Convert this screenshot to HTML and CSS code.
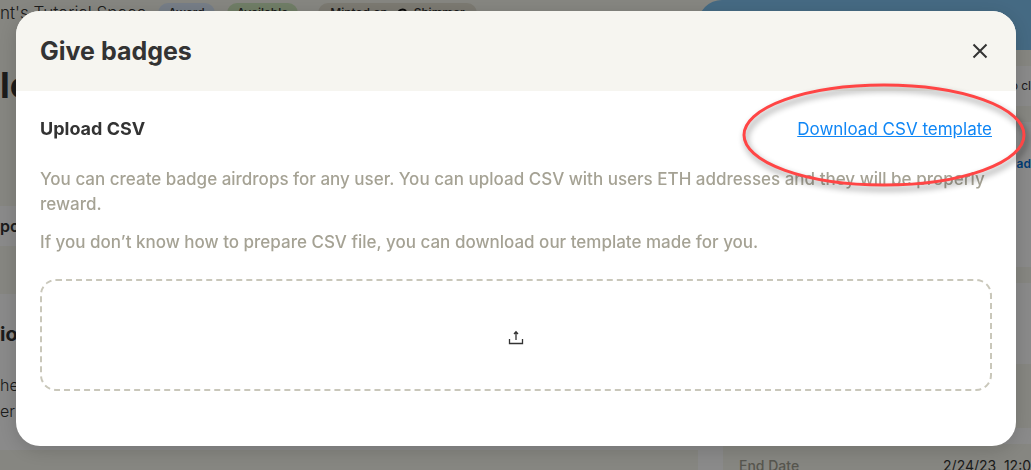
FILE: index.html
```html
<!DOCTYPE html>
<html lang="en">
<head>
<meta charset="utf-8">
<meta name="viewport" content="width=device-width, initial-scale=1">
<title>Give badges</title>
<link rel="stylesheet" href="styles.css">
</head>
<body>
<div class="page">
  <main class="main">
    <header class="intro">
      <div class="meta">
        <span class="space-name">nt's Tutorial Space</span>
        <span class="pill pill-blue">Award</span>
        <span class="pill pill-green">Available</span>
        <span class="pill pill-sand">Minted on:
          <svg class="shimmer" viewBox="0 0 12 12" aria-hidden="true"><path d="M10 3C7 0 2 2 2 6s4 5 7 3V7H6"/></svg>
          Shimmer</span>
      </div>
      <h1 class="name">le</h1>
    </header>
    <nav class="tabs">po</nav>
    <section class="about">
      <h2 class="about-title">ion</h2>
      <p class="about-text">he<br>er</p>
    </section>
  </main>
  <aside class="side">
    <div class="cover"></div>
    <div class="side-row claim">o cl</div>
    <div class="side-card"><a class="side-link" href="#">ad</a></div>
    <div class="side-row side-status"></div>
    <div class="side-dates"><span class="date-label">End Date</span><span class="date-value">2/24/23, 12:0</span></div>
  </aside>
</div>
<div class="backdrop">
  <section class="modal" role="dialog" aria-labelledby="modal-title">
    <header class="modal-header">
      <h2 class="modal-title" id="modal-title">Give badges</h2>
      <button class="close" type="button" aria-label="Close">
        <svg viewBox="0 0 24 24"><path d="M5.500 5.500l13 13M18.500 5.500l-13 13"/></svg>
      </button>
    </header>
    <div class="modal-body">
      <div class="upload-head">
        <h3 class="upload-title">Upload CSV</h3>
        <a class="download" href="#">Download CSV template</a>
      </div>
      <div class="help">
        <p>You can create badge airdrops for any user. You can upload CSV with users ETH addresses and they will be properly reward.</p>
        <p>If you don’t know how to prepare CSV file, you can download our template made for you.</p>
      </div>
      <label class="dropzone">
        <input class="file" type="file" accept=".csv" aria-label="Upload CSV file">
        <svg class="upload-icon" viewBox="0 0 16 16" aria-hidden="true"><path d="M1.500 9v4.500h13V9M8 10V2M6 4l2-2.200L10 4"/></svg>
      </label>
    </div>
    <svg class="highlight" viewBox="0 0 284 104" aria-hidden="true"><ellipse cx="142" cy="52" rx="140" ry="50"/></svg>
  </section>
</div>
</body>
</html>
```
FILE: styles.css
```css
* { box-sizing: border-box; }
body {
  margin: 0;
  height: 100vh;
  overflow: hidden;
  font-family: Inter, "Open Sans", sans-serif;
  font-size: 16px;
  color: #333;
  background: #fff;
}
h1, h2, h3, p { margin: 0; }

.page {
  display: grid;
  grid-template-columns: 1fr 333px;
  height: 100vh;
  background: #f8f8ee;
}
.main { display: flex; flex-direction: column; min-width: 0; }
.intro { height: 206px; }
.meta { display: flex; gap: 12px; align-items: center; height: 26px; white-space: nowrap; }
.space-name { font-size: 17px; font-weight: 300; }
.pill { padding: 0 10px; font-size: 12px; line-height: 20px; border-radius: 10px; font-weight: 500; }
.pill-blue { background: #dbe9fa; }
.pill-green { background: #cfe8bd; }
.pill-sand { margin-left: 8px; padding: 0 12px; background: #e4e1d2; }
.shimmer { width: 12px; height: 12px; margin: 0 2px; vertical-align: middle; fill: none; stroke: #111; stroke-width: 2; }
.name { margin-top: 34px; font-size: 36px; line-height: 50px; }
.tabs { height: 40px; background: #fff; font-weight: 600; line-height: 40px; }
.about { margin-top: 48px; height: 156px; padding-top: 26px; background: #fff; }
.about-title { font-size: 20px; line-height: 28px; }
.about-text { margin-top: 24px; line-height: 26px; font-weight: 300; }

.side { display: flex; flex-direction: column; background: #f8f8ee; }
.cover { height: 50px; flex: none; border-top-left-radius: 24px; background: #80c4f2; }
.side-row { flex: none; background: #fff; }
.claim { height: 40px; margin-top: 16px; text-align: right; font-size: 12px; line-height: 40px; }
.side-card { height: 145px; flex: none; margin-top: 16px; padding-top: 30px; text-align: right; background: #fff; }
.side-link { color: #0070d8; font-size: 12px; font-weight: 600; line-height: 20px; text-decoration: none; }
.side-status { height: 81px; margin-top: 16px; }
.side-dates {
  display: flex;
  flex: none;
  justify-content: space-between;
  height: 42px;
  margin-top: 64px;
  padding: 12px 0 0 16px;
  border-left: 25px solid #fff;
  border-top: 16px solid #fff;
  font-size: 14px;
  line-height: 20px;
  white-space: nowrap;
}
.date-label { color: #a09e92; font-weight: 500; }

.backdrop {
  position: fixed;
  inset: 0;
  display: flex;
  justify-content: center;
  align-items: flex-start;
  padding: 11px 15px 24px 16px;
  background: rgba(0, 0, 0, 0.46);
}
.modal {
  position: relative;
  width: 100%;
  max-width: 1000px;
  border-radius: 24px;
  background: #fff;
  box-shadow: 0 4px 20px rgba(0, 0, 0, 0.16);
}
.modal-header {
  display: flex;
  justify-content: space-between;
  align-items: center;
  height: 80px;
  padding: 0 24px;
  border-radius: 24px 24px 0 0;
  background: #f6f5f0;
}
.modal-title { font-size: 25px; line-height: 32px; font-weight: 700; }
.close { width: 24px; height: 24px; padding: 0; border: 0; background: none; cursor: pointer; }
.close svg { display: block; width: 24px; height: 24px; fill: none; stroke: #333; stroke-width: 2; }
.modal-body { padding: 24px 24px 55px; }
.upload-head { display: flex; justify-content: space-between; align-items: center; line-height: 28px; }
.upload-title { font-size: 18px; font-weight: 700; }
.download { color: #0f86f5; font-size: 17px; }
.help { display: grid; gap: 13px; margin: 24px 0; color: #a5a294; font-size: 17px; font-weight: 500; line-height: 25px; }
.dropzone {
  display: flex;
  align-items: center;
  justify-content: center;
  height: 112px;
  padding-top: 6px;
  border: 2px dashed #c9c7ba;
  border-radius: 16px;
  cursor: pointer;
}
.file { position: absolute; width: 1px; height: 1px; opacity: 0; }
.upload-icon { width: 16px; height: 16px; fill: none; stroke: #333; stroke-width: 1.3; }
.highlight {
  position: absolute;
  top: 72px;
  right: -10px;
  width: 284px;
  height: 104px;
  overflow: visible;
  fill: none;
  stroke: #ff4545;
  stroke-width: 3;
  pointer-events: none;
  filter: drop-shadow(2px 4px 3px rgba(0, 0, 0, 0.45));
}
```
